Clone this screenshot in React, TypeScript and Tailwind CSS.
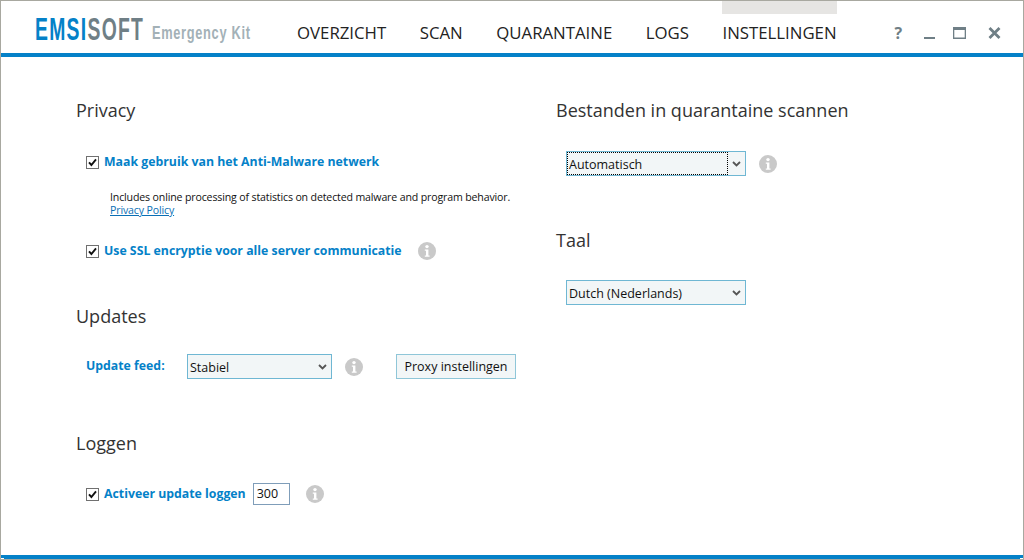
import type { ReactNode } from 'react'

const tabs = ['OVERZICHT', 'SCAN', 'QUARANTAINE', 'LOGS', 'INSTELLINGEN']

const uiFont = "font-['Open_Sans','Noto_Sans',sans-serif]"

function InfoIcon() {
  return (
    <svg width="18" height="18" viewBox="0 0 18 18" className="shrink-0">
      <circle cx="9" cy="9" r="9" fill="#c9c9c9" />
      <circle cx="9" cy="4.6" r="1.7" fill="#fff" />
      <path d="M6.8 7.4h3.6v6h1.2v1.4H6.8v-1.4h1.2V8.8H6.8z" fill="#fff" />
    </svg>
  )
}

function Checkbox() {
  return (
    <svg width="13" height="13" viewBox="0 0 13 13" className="shrink-0">
      <rect x="0.5" y="0.5" width="12" height="12" fill="#fff" stroke="#707070" />
      <path d="M3 6.3 5.4 9 10 3.4" fill="none" stroke="#111" strokeWidth="1.9" />
    </svg>
  )
}

function Chevron() {
  return (
    <svg width="9" height="6" viewBox="0 0 9 6">
      <path d="M1 1 4.5 4.5 8 1" fill="none" stroke="#555" strokeWidth="1.8" />
    </svg>
  )
}

function Select({ label, width, focused }: { label: string; width: string; focused?: boolean }) {
  return (
    <div className={`${width} flex h-[25px] items-center border border-[#6fb7d3] bg-[#f2f6f7] text-[12.5px] text-[#111]`}>
      <span
        className={
          focused
            ? 'flex h-full flex-1 items-center border border-dotted border-black pl-[1px] pt-[3px]'
            : 'flex h-full flex-1 items-center pl-[2px] pt-[3px]'
        }
      >
        {label}
      </span>
      <span className="flex w-[17px] justify-center">
        <Chevron />
      </span>
    </div>
  )
}

function Heading({ children }: { children: ReactNode }) {
  return <h2 className="text-[18px] leading-[24px] text-[#333]">{children}</h2>
}

function CheckLabel({ children }: { children: ReactNode }) {
  return <span className="block text-[12.3px] font-bold leading-[18px] text-[#0481c8]">{children}</span>
}

export default function App() {
  return (
    <div className={`${uiFont} relative flex h-[560px] w-[1024px] flex-col overflow-hidden border border-[#a8a8a0] bg-white`}>
      {/* cut window corners */}
      <div className="absolute -left-px -top-px h-[5px] w-[5px] bg-white" />
      <div className="absolute -right-px -top-px h-[5px] w-[5px] bg-white" />
      <div className="absolute -bottom-px -left-px h-[2px] w-[4px] bg-white" />
      <div className="absolute -bottom-px -right-px h-[2px] w-[4px] bg-white" />

      {/* title bar */}
      <header className="flex h-[52px] shrink-0 items-start pl-[34px]">
        <div className="mt-[12px] flex w-[262px] items-baseline font-['Liberation_Sans',sans-serif]">
          <span className="w-[109px] origin-left scale-x-[0.635] whitespace-nowrap text-[30.5px] font-bold leading-[32px] tracking-[2px]">
            <span className="text-[#0481c8]">EMSI</span>
            <span className="text-[#6f7f86]">SOFT</span>
          </span>
          <span className="ml-[8px] origin-left -translate-y-[1px] scale-x-[0.675] whitespace-nowrap text-[19px] font-bold leading-[22px] tracking-[1px] text-[#a3b1b7]">
            Emergency Kit
          </span>
        </div>
        <nav className="flex h-full gap-[33.5px]">
          {tabs.map((tab) => (
            <div key={tab} className="flex flex-col">
              <div className={tab === 'INSTELLINGEN' ? 'h-[13px] bg-[#e6e5e3]' : 'h-[13px]'} />
              <span className="mt-[8px] text-[16.8px] leading-[22px] text-[#222]">{tab}</span>
            </div>
          ))}
        </nav>
        <div className="ml-[58px] mt-[22px] flex items-center text-[#6f7f86]">
          <span className="w-[12px] font-bold leading-[20px]">?</span>
          <svg width="12" height="20" viewBox="0 0 12 20" className="ml-[17px]">
            <rect x="0" y="14" width="11" height="2" fill="currentColor" />
          </svg>
          <svg width="13" height="12" viewBox="0 0 13 12" className="ml-[17px]">
            <path d="M.65.75h11.7v10.5H.65z" fill="none" stroke="currentColor" strokeWidth="1.3" />
            <rect x="0" y="0" width="13" height="3" fill="currentColor" />
          </svg>
          <svg width="13" height="12" viewBox="0 0 13 12" className="ml-[22px]">
            <path d="M1.5 1 11.5 11M11.5 1 1.5 11" stroke="currentColor" strokeWidth="2.8" />
          </svg>
        </div>
      </header>
      <div className="h-[4px] shrink-0 bg-[#0481c8]" />

      {/* settings */}
      <main className="flex flex-1 pl-[75px] pt-[41px]">
        <section className="flex w-[480px] flex-col">
          <Heading>Privacy</Heading>
          <label className="ml-[10px] mt-[31px] flex items-center gap-[5px]">
            <Checkbox />
            <CheckLabel>Maak gebruik van het Anti-Malware netwerk</CheckLabel>
          </label>
          <p className="ml-[34px] mt-[20px] text-[10.6px] leading-[13px] tracking-[-0.15px] text-[#111]">
            Includes online processing of statistics on detected malware and program behavior.
            <br />
            <a className="text-[#0a6fb5] underline">Privacy Policy</a>
          </p>
          <label className="ml-[10px] mt-[25px] flex items-center gap-[5px]">
            <Checkbox />
            <CheckLabel>Use SSL encryptie voor alle server communicatie</CheckLabel>
            <span className="ml-[11px]">
              <InfoIcon />
            </span>
          </label>

          <div className="mt-[44px]">
            <Heading>Updates</Heading>
          </div>
          <div className="ml-[10px] mt-[26px] flex items-center">
            <span className="mb-[2px] w-[101px]">
              <CheckLabel>Update feed:</CheckLabel>
            </span>
            <Select label="Stabiel" width="w-[145px]" />
            <span className="ml-[13px]">
              <InfoIcon />
            </span>
            <button className="ml-[33px] h-[25px] w-[120px] border border-[#8fc6d8] bg-[#f2f6f7] pt-[2px] text-[12.5px] text-[#111]">
              Proxy instellingen
            </button>
          </div>

          <div className="mt-[52px]">
            <Heading>Loggen</Heading>
          </div>
          <label className="ml-[10px] mt-[28px] flex items-center gap-[5px]">
            <Checkbox />
            <CheckLabel>Activeer update loggen</CheckLabel>
            <span className="ml-[2px] flex h-[22px] w-[37px] items-center border border-[#7f9db9] pl-[3px] pt-[1px] text-[12.5px] text-[#111]">
              300
            </span>
            <span className="ml-[11px]">
              <InfoIcon />
            </span>
          </label>
        </section>

        <section className="flex flex-col">
          <Heading>Bestanden in quarantaine scannen</Heading>
          <div className="ml-[10px] mt-[29px] flex items-center gap-[13px]">
            <Select label="Automatisch" width="w-[180px]" focused />
            <InfoIcon />
          </div>
          <div className="mt-[52px]">
            <Heading>Taal</Heading>
          </div>
          <div className="ml-[10px] mt-[28px]">
            <Select label="Dutch (Nederlands)" width="w-[180px]" />
          </div>
        </section>
      </main>

      <div className="h-[4px] shrink-0 bg-[#0481c8]" />
    </div>
  )
}
